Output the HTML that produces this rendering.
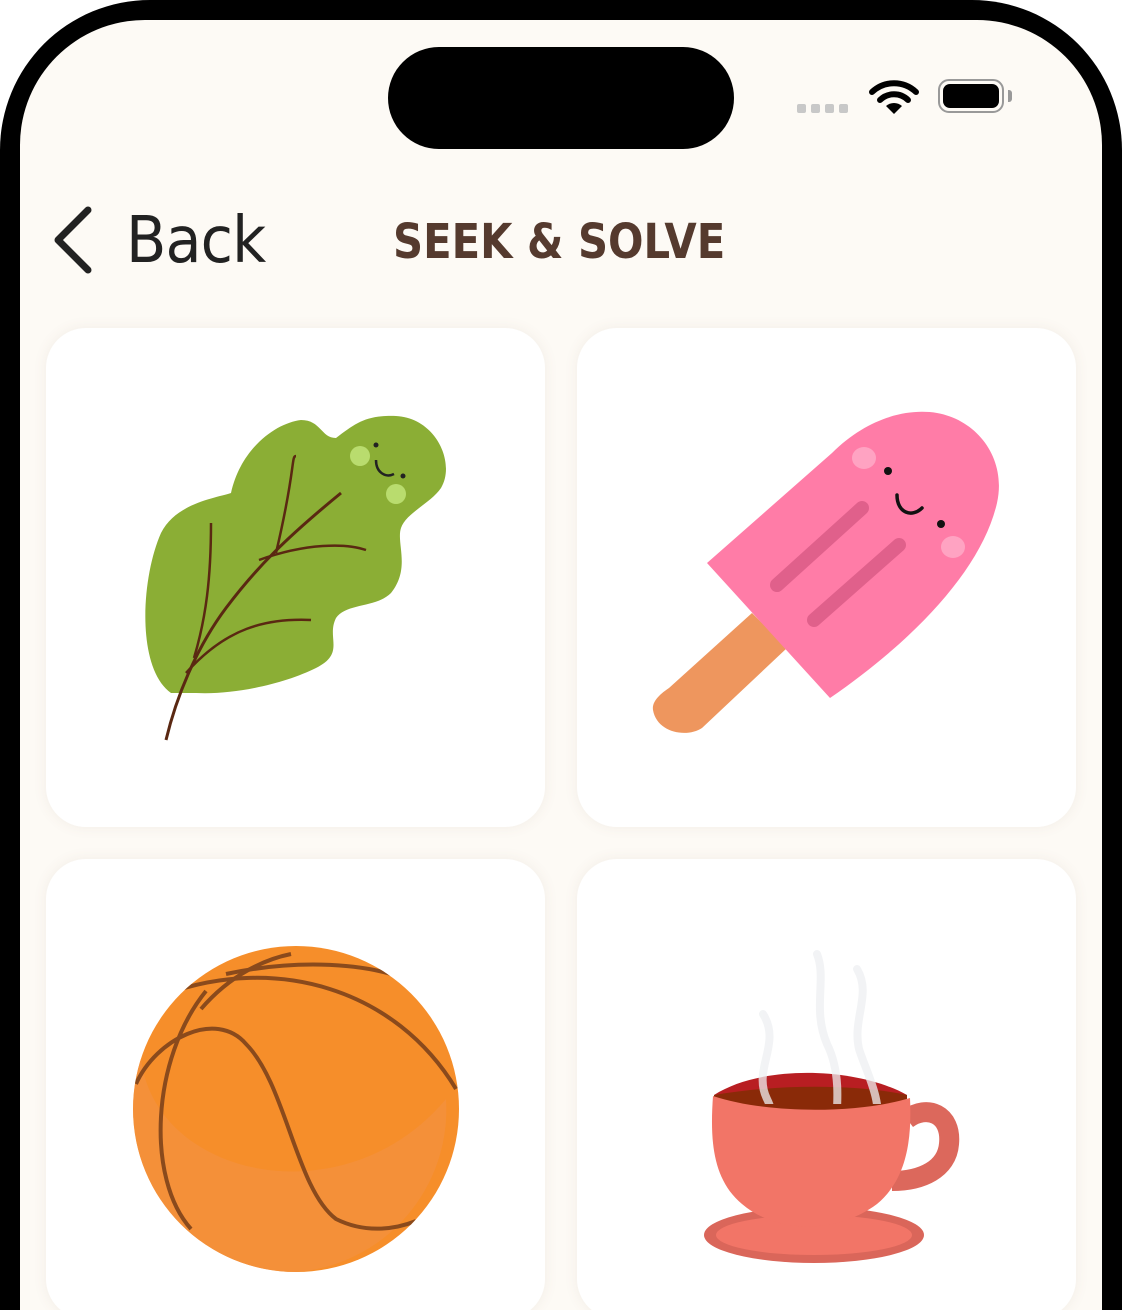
<!DOCTYPE html>
<html><head><meta charset="utf-8"><style>
html,body{margin:0;padding:0;width:1122px;height:1310px;overflow:hidden;background:#fff;position:relative}
.frame{position:absolute;left:0;top:0;width:1122px;height:1310px;background:#000;border-radius:150px 150px 0 0}
.screen{position:absolute;left:20px;top:20px;width:1082px;height:1290px;background:#fdfaf5;border-radius:125px 125px 0 0;overflow:hidden}
.island{position:absolute;left:388px;top:47px;width:346px;height:102px;background:#000;border-radius:51px}
.card{position:absolute;width:499px;height:499px;background:#fff;border-radius:40px;box-shadow:0 0 14px rgba(120,90,60,0.08)}
.t{position:absolute;font-family:"DejaVu Sans","Liberation Sans",sans-serif}
</style></head><body>
<div class="frame"></div>
<div class="screen"></div>
<div class="island"></div>
<div style="position:absolute;left:797px;top:104px;">
<span style="position:absolute;left:0;top:0;width:9px;height:9px;background:#c8c8c8;border-radius:2px"></span>
<span style="position:absolute;left:14px;top:0;width:9px;height:9px;background:#c8c8c8;border-radius:2px"></span>
<span style="position:absolute;left:28px;top:0;width:9px;height:9px;background:#c8c8c8;border-radius:2px"></span>
<span style="position:absolute;left:42px;top:0;width:9px;height:9px;background:#c8c8c8;border-radius:2px"></span>
</div>
<svg style="position:absolute;left:868px;top:78px" width="52" height="38" viewBox="0 0 52 38">
<path d="M4 14 A32 32 0 0 1 48 14" stroke="#000" stroke-width="6" fill="none" stroke-linecap="round"/>
<path d="M12 22 A20 20 0 0 1 40 22" stroke="#000" stroke-width="6" fill="none" stroke-linecap="round"/>
<path d="M26 36 L18 28 A12 12 0 0 1 34 28 Z" fill="#000"/>
</svg>
<div style="position:absolute;left:938px;top:79px;width:66px;height:34px;border:2px solid #999;border-radius:11px;box-sizing:border-box"></div>
<div style="position:absolute;left:943px;top:84px;width:56px;height:24px;background:#000;border-radius:7px"></div>
<div style="position:absolute;left:1008px;top:90px;width:4px;height:12px;background:#999;border-radius:0 3px 3px 0"></div>
<svg style="position:absolute;left:48px;top:204px" width="46" height="72"><path d="M40 6 L10 36 L40 66" stroke="#222" stroke-width="7" fill="none" stroke-linecap="round" stroke-linejoin="round"/></svg>
<div class="t" style="left:126px;top:204px;font-size:64px;color:#222;letter-spacing:-1px;transform:scaleX(0.92);transform-origin:left">Back</div>
<div class="t" style="left:393px;top:214px;font-size:48px;font-weight:bold;color:#553a2e;transform:scaleX(0.87);transform-origin:left">SEEK &amp; SOLVE</div>
<div class="card" style="left:46px;top:328px"></div>
<div class="card" style="left:577px;top:328px"></div>
<div class="card" style="left:46px;top:859px;height:460px"></div>
<div class="card" style="left:577px;top:859px;height:460px"></div>
<svg style="position:absolute;left:46px;top:328px" width="499" height="499">
<path d="M125 365 C90 340 95 250 115 205 C130 175 170 170 185 165 C195 120 230 95 255 92 C275 92 275 110 290 110 C310 95 320 87 350 88 C390 90 410 135 395 160 C385 175 360 185 355 200 C350 215 365 240 345 265 C330 280 300 275 290 290 C280 310 300 325 270 340 C240 355 190 367 150 365 Z" fill="#8bae35"/>
<path d="M120 412 C130 370 150 320 180 280 C210 240 240 210 295 165" stroke="#5a2812" stroke-width="3" fill="none"/>
<path d="M148 330 C160 290 165 250 165 195" stroke="#5a2812" stroke-width="2.5" fill="none"/>
<path d="M230 225 C250 140 245 128 250 128" stroke="#5a2812" stroke-width="2.5" fill="none"/>
<path d="M213 232 C260 215 300 215 320 222" stroke="#5a2812" stroke-width="2.5" fill="none"/>
<path d="M140 345 C180 300 220 290 265 292" stroke="#5a2812" stroke-width="2.5" fill="none"/>
<circle cx="314" cy="128" r="10" fill="#b9dc6e"/><circle cx="350" cy="166" r="10" fill="#b9dc6e"/>
<circle cx="330" cy="117" r="2.5" fill="#222"/><circle cx="357" cy="148" r="2.5" fill="#222"/>
<path d="M330 132 C330 145 340 150 348 146" stroke="#222" stroke-width="2.5" fill="none"/>
</svg>
<svg style="position:absolute;left:577px;top:328px" width="499" height="499">
<path d="M92 360 L175 285 L210 320 L125 400 C110 410 80 405 76 382 C75 375 80 368 92 360 Z" fill="#ee965e"/>
<path d="M130 235 L255 125 C290 90 330 80 360 85 C400 92 430 130 420 175 C405 240 340 310 253 370 Z" fill="#ff7ca7"/>
<path d="M200 257 L285 180" stroke="#e0608b" stroke-width="14" stroke-linecap="round"/>
<path d="M237 292 L322 217" stroke="#e0608b" stroke-width="14" stroke-linecap="round"/>
<ellipse cx="287" cy="130" rx="12" ry="11" fill="#ffa3c2"/><ellipse cx="376" cy="219" rx="12" ry="11" fill="#ffa3c2"/>
<circle cx="311" cy="143" r="4" fill="#111"/><circle cx="364" cy="196" r="4" fill="#111"/>
<path d="M320 167 C320 185 335 190 345 180" stroke="#111" stroke-width="3.5" fill="none" stroke-linecap="round"/>
</svg>
<svg style="position:absolute;left:46px;top:859px" width="499" height="451">
<defs><clipPath id="bc"><circle cx="250" cy="250" r="163"/></clipPath></defs>
<circle cx="250" cy="250" r="163" fill="#f68e2a"/>
<path d="M250 413 A163 163 0 0 1 95 200 C110 320 300 360 400 240 A163 163 0 0 1 250 413Z" fill="#f49240" opacity="0.7"/>
<g stroke="#8a4a1c" stroke-width="4" fill="none" clip-path="url(#bc)">
<path d="M120 135 C230 95 350 130 410 230"/>
<path d="M180 115 C250 100 310 105 345 115"/>
<path d="M160 132 C105 200 100 320 145 370"/>
<path d="M90 225 C110 180 170 150 200 185 C240 225 250 330 290 360 C320 375 350 370 370 362"/>
<path d="M155 150 C185 115 220 100 245 95"/>
</g>
</svg>
<svg style="position:absolute;left:577px;top:859px" width="499" height="451" viewBox="0 0 499 451">
<defs><clipPath id="sc"><rect x="0" y="0" width="499" height="245"/></clipPath></defs>
<ellipse cx="237" cy="376" rx="110" ry="28" fill="#da665a"/>
<ellipse cx="237" cy="376" rx="98" ry="20" fill="#f27567"/>
<path d="M330 260 C350 245 375 255 372 285 C370 310 345 322 315 322" stroke="#dc685c" stroke-width="20" fill="none"/>
<path d="M137 236 C185 205 280 208 330 236 Z" fill="#b81e22"/>
<path d="M137 236 C200 225 280 225 330 236 L330 240 C300 255 180 255 137 240 Z" fill="#8a2a08"/>
<path d="M136 237 C190 255 280 255 333 239 C335 280 330 320 300 345 C260 375 200 375 165 345 C135 320 133 280 136 237 Z" fill="#f27567"/>
<g stroke="#eef0f2" stroke-width="8" fill="none" stroke-linecap="round" opacity="0.75" clip-path="url(#sc)">
<path d="M186 155 C205 185 175 210 190 240 C200 260 195 280 193 290"/>
<path d="M240 95 C250 120 235 150 250 185 C265 215 260 250 258 280"/>
<path d="M280 110 C295 135 275 160 282 190 C290 215 305 240 300 270"/>
</g>
</svg>
</body></html>
